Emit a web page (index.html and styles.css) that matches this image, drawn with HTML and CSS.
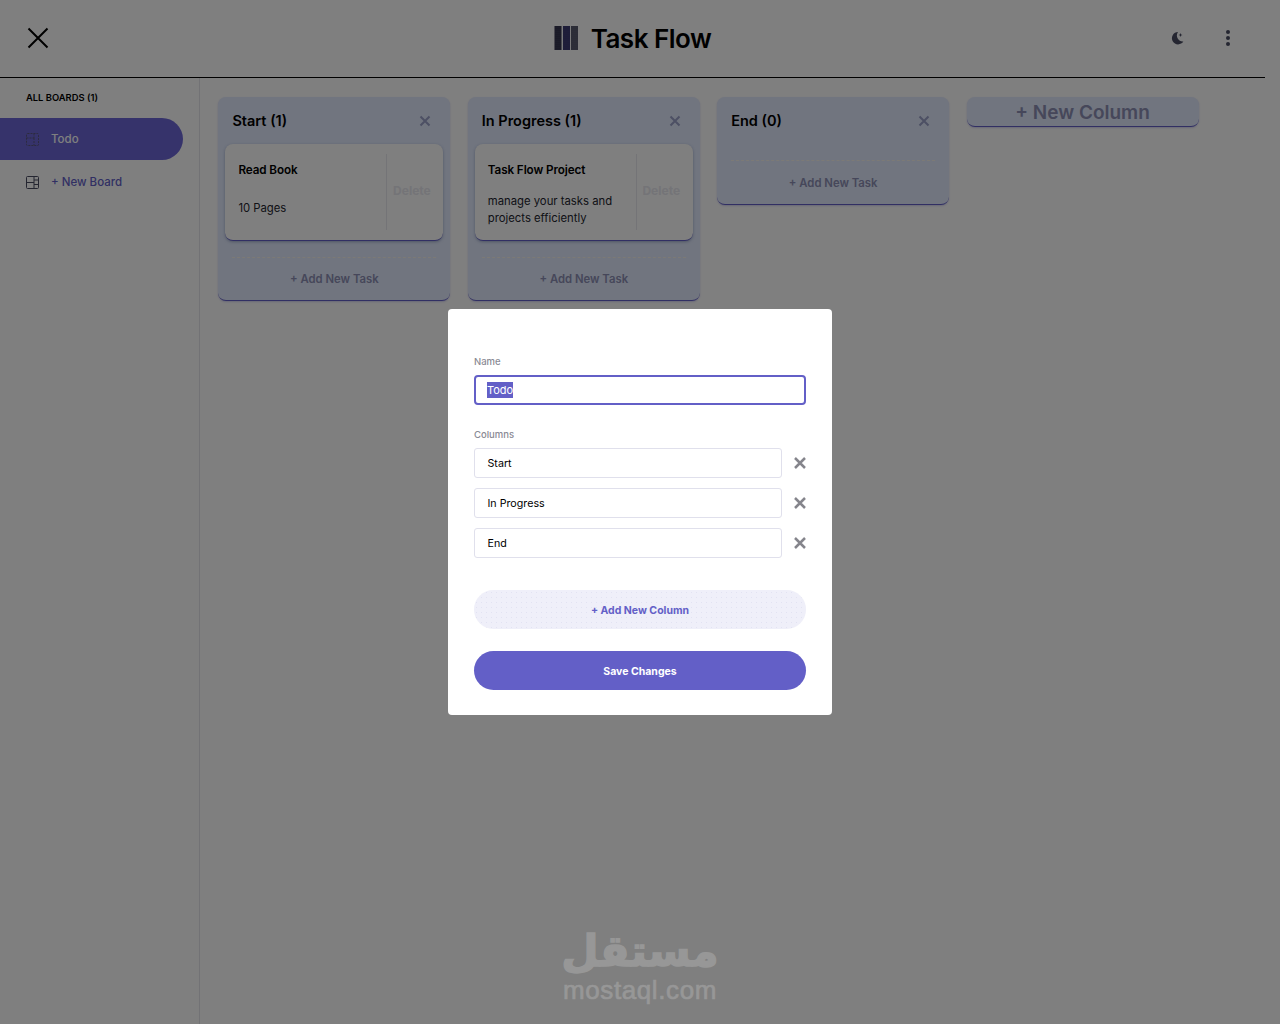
FILE: index.html
```html
<!DOCTYPE html>
<html lang="en">
<head>
  <meta charset="UTF-8">
  <meta name="viewport" content="width=device-width, initial-scale=1.0">
  <title>Task Flow</title>
  <link rel="stylesheet" href="styles.css">
</head>
<body>
  <div class="app">
    <header class="topbar">
      <button class="menu-close" aria-label="Close sidebar">
        <svg width="22" height="22" viewBox="0 0 22 22"><path d="M1.5 1.5l19 19M20.500 1.5l-19 19" stroke="#000" stroke-width="2" fill="none"/></svg>
      </button>
      <div class="brand">
        <svg class="brand-logo" width="24" height="24" viewBox="0 0 24 24">
          <defs>
            <pattern id="dots" width="2" height="2" patternUnits="userSpaceOnUse"><circle cx="1" cy="1" r="0.5" fill="#8a8aa0"/></pattern>
          </defs>
          <rect x="0.500" width="7" height="24" fill="#2e2d48"/>
          <rect x="9" width="7" height="24" fill="#35336e"/>
          <rect x="17" width="7" height="24" fill="#55576a"/>
          <rect x="0.500" width="23.500" height="24" fill="url(#dots)" opacity="0.5"/>
        </svg>
        <h1>Task Flow</h1>
      </div>
      <div class="actions">
        <svg width="14" height="14" viewBox="0 0 14 14"><path d="M8 1a6.200 6.200 0 1 0 5.400 9.400A6 6 0 0 1 8 1z" fill="#4a4d63"/><path d="M10.500 2l.6 1.400 1.400.6-1.400.6-.6 1.400-.6-1.400L8.500 4l1.400-.6z" fill="#4a4d63"/></svg>
        <svg width="6" height="16" viewBox="0 0 6 16"><circle cx="3" cy="2" r="2" fill="#4a4d63"/><circle cx="3" cy="8" r="2" fill="#4a4d63"/><circle cx="3" cy="14" r="2" fill="#4a4d63"/></svg>
      </div>
    </header>

    <div class="main">
      <aside class="sidebar">
        <h2 class="sidebar-title">ALL BOARDS (1)</h2>
        <a class="board-link active">
          <svg width="13" height="13" viewBox="0 0 13 13"><path d="M1.500.5h10a1 1 0 0 1 1 1v10a1 1 0 0 1-1 1h-10a1 1 0 0 1-1-1v-10a1 1 0 0 1 1-1zM.5 5h7.500M8 .5V5M8 5v7.500" fill="none" stroke="#5a577f" stroke-dasharray="2 1"/></svg>
          <span>Todo</span>
        </a>
        <a class="board-link new">
          <svg width="13" height="13" viewBox="0 0 13 13"><path d="M1.500.5h10a1 1 0 0 1 1 1v10a1 1 0 0 1-1 1h-10a1 1 0 0 1-1-1v-10a1 1 0 0 1 1-1zM.5 6.500H8M8 .5v12M8 4h4.500M8 8.500h4.500" fill="none" stroke="#4a4d63"/></svg>
          <span>+ New Board</span>
        </a>
      </aside>

      <section class="board">
        <div class="column">
          <div class="column-head">
            <h3>Start (1)</h3>
            <svg class="x-small" viewBox="0 0 12 12"><path d="M1.500 1.500l9 9M10.500 1.500l-9 9"/></svg>
          </div>
          <div class="card">
            <div class="card-body">
              <h4>Read Book</h4>
              <p>10 Pages</p>
            </div>
            <div class="card-side">Delete</div>
          </div>
          <div class="column-foot">+ Add New Task</div>
        </div>

        <div class="column">
          <div class="column-head">
            <h3>In Progress (1)</h3>
            <svg class="x-small" viewBox="0 0 12 12"><path d="M1.500 1.500l9 9M10.500 1.500l-9 9"/></svg>
          </div>
          <div class="card">
            <div class="card-body">
              <h4>Task Flow Project</h4>
              <p>manage your tasks and<br>projects efficiently</p>
            </div>
            <div class="card-side">Delete</div>
          </div>
          <div class="column-foot">+ Add New Task</div>
        </div>

        <div class="column">
          <div class="column-head">
            <h3>End (0)</h3>
            <svg class="x-small" viewBox="0 0 12 12"><path d="M1.500 1.500l9 9M10.500 1.500l-9 9"/></svg>
          </div>
          <div class="column-foot">+ Add New Task</div>
        </div>

        <div class="column new-column">+ New Column</div>
      </section>
    </div>
  </div>

  <div class="overlay"></div>

  <div class="modal">
    <div class="label">Name</div>
    <div class="field focused"><span class="selected">Todo</span></div>

    <div class="label columns-label">Columns</div>
    <div class="col-row">
      <div class="field">Start</div>
      <svg class="x-remove" viewBox="0 0 12 12"><path d="M1 1l10 10M11 1L1 11"/></svg>
    </div>
    <div class="col-row">
      <div class="field">In Progress</div>
      <svg class="x-remove" viewBox="0 0 12 12"><path d="M1 1l10 10M11 1L1 11"/></svg>
    </div>
    <div class="col-row">
      <div class="field">End</div>
      <svg class="x-remove" viewBox="0 0 12 12"><path d="M1 1l10 10M11 1L1 11"/></svg>
    </div>

    <button class="pill pill-light">+ Add New Column</button>
    <button class="pill pill-main">Save Changes</button>
  </div>

  <div class="watermark">
    <div class="watermark-ar" lang="ar" dir="rtl">مستقل</div>
    <div class="watermark-en">mostaql.com</div>
  </div>
</body>
</html>
```
FILE: styles.css
```css
* {
  box-sizing: border-box;
}
html, body {
  margin: 0;
  height: 1024px;
  overflow: hidden;
  background: #fff;
  font-family: "Inter", "Liberation Sans", sans-serif;
}
h1, h2, h3, h4, p {
  margin: 0;
}

.app {
  width: 1265px;
}
.topbar {
  display: grid;
  grid-template-columns: 1fr auto 1fr;
  align-items: center;
  height: 78px;
  padding-bottom: 1px;
  border-bottom: 1px solid #000;
}
.menu-close {
  justify-self: start;
  display: flex;
  margin-left: 27px;
  padding: 0;
  border: 0;
  background: none;
}
.brand {
  display: flex;
  align-items: center;
  gap: 13px;
}
.brand h1 {
  font-size: 26px;
  font-weight: 600;
  letter-spacing: -0.5px;
  color: #000;
}
.actions {
  justify-self: end;
  display: flex;
  align-items: center;
  gap: 41px;
  margin-right: 34px;
}

.main {
  display: flex;
  height: 946px;
}
.sidebar {
  flex: none;
  width: 200px;
  padding-top: 14px;
  border-right: 1px solid #e4e4ea;
}
.sidebar-title {
  margin: 0 0 14px 26px;
  font-size: 9.4px;
  line-height: 12px;
  font-weight: 600;
  color: #000;
}
.board-link {
  display: flex;
  align-items: center;
  gap: 12px;
  width: 183px;
  height: 42px;
  padding: 0 0 0 26px;
  font-size: 11.5px;
  font-weight: 500;
}
.board-link.active {
  border-radius: 0 21px 21px 0;
  background: #6c67d6;
  color: #fff;
}
.board-link.new {
  height: 44px;
  color: #635fc7;
}

.board {
  display: flex;
  align-items: flex-start;
  gap: 17.4px;
  padding: 19px 0 0 18.4px;
}
.column {
  flex: none;
  width: 232px;
  padding: 0 7px;
  border-radius: 8px;
  border-bottom: 1px solid #635fc7;
  background: #e2eafe;
  box-shadow: 0 1px 2px rgba(99, 95, 199, 0.3);
}
.column-head {
  display: flex;
  align-items: center;
  justify-content: space-between;
  height: 47px;
  padding: 0 12px 0 7px;
}
.column-head h3 {
  font-size: 14.5px;
  font-weight: 600;
  color: #000;
}
.x-small {
  width: 12px;
  height: 12px;
  fill: none;
  stroke: #9aa0c8;
  stroke-width: 2;
}
.card {
  display: flex;
  height: 96.5px;
  padding: 10px 0;
  border-radius: 8px;
  border-bottom: 1px solid #635fc7;
  background: #fff;
  box-shadow: 0 1px 3px rgba(54, 78, 126, 0.4);
}
.card-body {
  flex: 1;
  padding: 9px 0 0 13px;
}
.card-body h4 {
  height: 30px;
  font-size: 11.7px;
  line-height: 15px;
  letter-spacing: -0.1px;
  font-weight: 600;
  color: #000;
}
.card-body p {
  display: flex;
  min-height: 30px;
  align-items: center;
  font-size: 11.3px;
  line-height: 17px;
  color: #23242e;
}
.card-side {
  flex: none;
  display: flex;
  align-items: center;
  justify-content: center;
  width: 57px;
  padding: 0 7px 2px 0;
  border-left: 1px solid #e8e8ef;
  font-size: 12px;
  font-weight: 700;
  color: #e8e8ef;
}
.column-foot {
  margin: 16px 7px 0;
  height: 43.5px;
  padding-top: 1px;
  border-top: 1px dashed #f8f4ec;
  display: flex;
  align-items: center;
  justify-content: center;
  font-size: 11.3px;
  font-weight: 600;
  color: #8c8fb4;
}
.new-column {
  height: 30px;
  padding: 1px 0 0;
  display: flex;
  align-items: center;
  justify-content: center;
  font-size: 19px;
  font-weight: 600;
  color: #8c8fb4;
}

.overlay {
  position: absolute;
  inset: 0;
  background: rgba(0, 0, 0, 0.5);
}
.modal {
  position: absolute;
  left: 448px;
  top: 309px;
  width: 384px;
  height: 406px;
  padding: 46px 26px 0;
  border-radius: 4px;
  background: #fff;
}
.label {
  height: 13px;
  margin-bottom: 7px;
  font-size: 9.5px;
  line-height: 13px;
  font-weight: 500;
  color: #8a8a94;
}
.columns-label {
  margin-top: 23px;
}
.field {
  display: flex;
  align-items: center;
  height: 30px;
  padding-left: 12.5px;
  border: 1px solid #e0e0ec;
  border-radius: 3px;
  font-size: 10.7px;
  color: #000;
}
.field.focused {
  border: 2px solid #635fc7;
  border-radius: 4px;
  padding-left: 11px;
  font-size: 11px;
}
.selected {
  line-height: 16px;
  background: #635fc7;
  color: #fff;
}
.col-row {
  display: flex;
  align-items: center;
  gap: 12px;
  margin-bottom: 10px;
}
.col-row .field {
  flex: 1;
}
.x-remove {
  flex: none;
  width: 12px;
  height: 12px;
  fill: none;
  stroke: #85858c;
  stroke-width: 2.5;
}
.pill {
  display: block;
  width: 332px;
  height: 39px;
  padding: 2px 0 0;
  border: 0;
  border-radius: 20px;
  font-family: inherit;
  font-size: 10.5px;
  font-weight: 700;
}
.pill-light {
  margin-top: 32px;
  background: #efeff9 radial-gradient(#e2e2f2 0.6px, transparent 0.8px) 0 0 / 5px 5px;
  color: #635fc7;
}
.pill-main {
  margin-top: 22px;
  background: #635fc7;
  color: #fff;
}

.watermark {
  position: absolute;
  left: 540px;
  top: 926px;
  width: 200px;
  text-align: center;
  color: #979797;
}
.watermark-ar {
  height: 49px;
  font-family: "DejaVu Sans", sans-serif;
  font-size: 43px;
  line-height: 50px;
  font-weight: 700;
  -webkit-text-stroke: 1.5px #979797;
}
.watermark-en {
  font-family: "Liberation Sans", sans-serif;
  font-size: 26px;
  line-height: 30px;
  letter-spacing: 0.6px;
  -webkit-text-stroke: 0.7px #979797;
}
```
